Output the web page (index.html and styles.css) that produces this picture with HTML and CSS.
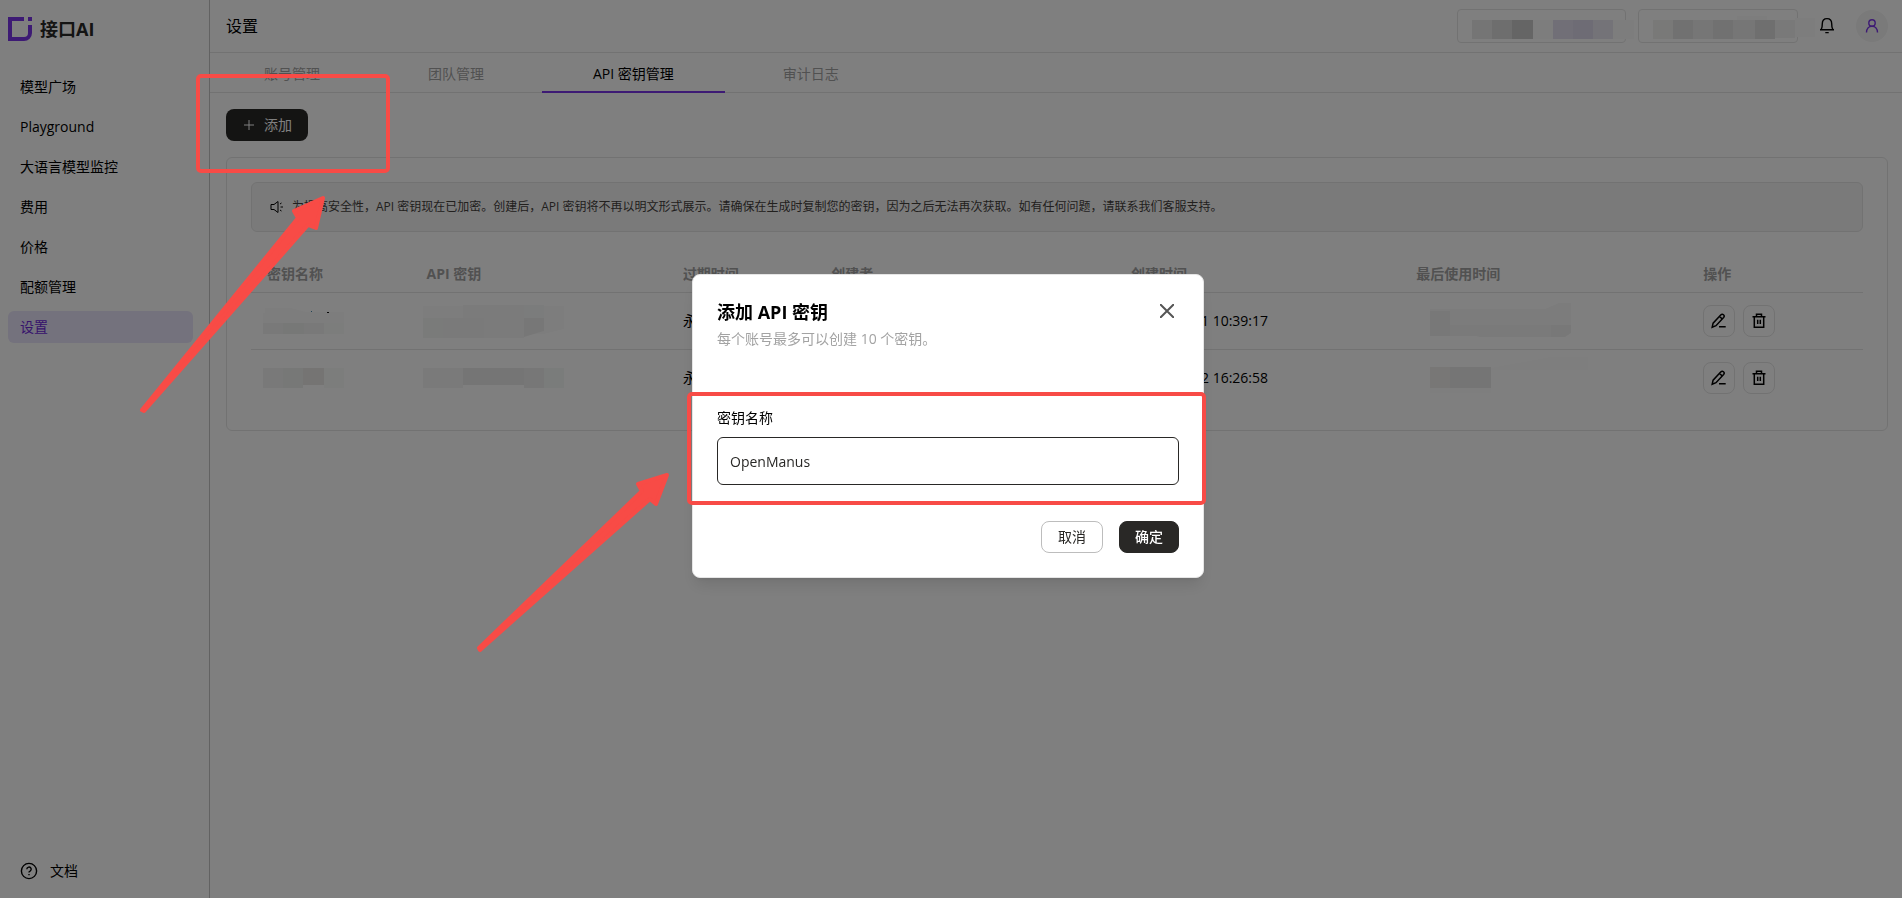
FILE: index.html
```html
<!DOCTYPE html>
<html lang="zh-CN">
<head>
<meta charset="utf-8">
<title>接口AI - 设置</title>
<link rel="stylesheet" href="styles.css">
</head>
<body>
<div class="app">
  <aside class="sidebar">
    <a class="brand" href="#">
      <svg class="brand-mark" viewBox="0 0 24 24" aria-hidden="true"><path d="M16 2H2v20h14a6 6 0 0 0 6-6V8" fill="none" stroke="#7b34e8" stroke-width="4"/><path d="M20 0h4v4h-4z" fill="#7b34e8"/></svg>
      <span>接口AI</span>
    </a>
    <nav class="nav">
      <a href="#">模型广场</a>
      <a href="#">Playground</a>
      <a href="#">大语言模型监控</a>
      <a href="#">费用</a>
      <a href="#">价格</a>
      <a href="#">配额管理</a>
      <a href="#" class="active" aria-current="page">设置</a>
    </nav>
    <a class="docs" href="#">
      <svg viewBox="0 0 18 18" aria-hidden="true"><circle cx="9" cy="9" r="7.6"/><path d="M6.8 7.3a2.2 2.2 0 1 1 3.3 1.9c-.8.4-1.1.7-1.1 1.3M9 12v1.3"/></svg>
      <span>文档</span>
    </a>
  </aside>
  <main class="main">
    <header class="topbar">
      <h1>设置</h1>
      <div class="tools">
        <div class="chip chip-a"><svg class="mosaic" width="164" height="19" aria-hidden="true"><path fill="#ebebeb" d="M0 0h20v19H0z"/><path fill="#dcdcdc" d="M20 0h20v19H20z"/><path fill="#cbcbcb" d="M40 0h21v19H40z"/><path fill="#fafafa" d="M61 0h20v19H61zM141 0h21v19h-21z"/><path fill="#e2dfee" d="M81 0h20v19H81z"/><path fill="#dcd8ea" d="M101 0h20v19h-20z"/><path fill="#e9e7f0" d="M121 0h20v19h-20z"/></svg></div>
        <div class="chip chip-b"><svg class="mosaic" width="164" height="19" aria-hidden="true"><path fill="#f3f3f0" d="M0 0h20v19H0z"/><path fill="#e2e2e2" d="M20 0h20v19H20z"/><path fill="#ececec" d="M40 0h20v19H40zM80 0h22v19H80z"/><path fill="#e2e2e2" d="M60 0h20v19H60z"/><path fill="#dedede" d="M102 0h20v19h-20z"/><path fill="#f3f3f3" d="M122 0h20v18h-20z"/><path fill="#fbfbfb" d="M142-2h20v19h-20zM84-4h30v4H84z"/></svg></div>
        <button class="bell" type="button" aria-label="通知"><svg viewBox="0 0 18 18" aria-hidden="true"><path d="M2 12.7h14M3.2 12.5C4.3 11 4.3 9 4.3 6.8 4.3 3.7 6.2 1.6 9 1.6s4.700 2.100 4.700 5.200c0 2.200 0 4.200 1.100 5.700M7.300 15.600h3.400"/></svg></button>
        <button class="avatar" type="button" aria-label="账户"><svg viewBox="0 0 16 16" aria-hidden="true"><circle cx="8" cy="5" r="3.200"/><path d="M2.500 14.500c0-3.500 2.200-6.300 5.500-6.300s5.500 2.800 5.500 6.300"/></svg></button>
      </div>
    </header>
    <nav class="tabs">
      <a href="#">账号管理</a>
      <a href="#">团队管理</a>
      <a href="#" class="active" aria-current="page">API 密钥管理</a>
      <a href="#">审计日志</a>
    </nav>
    <div class="content">
      <button class="add" type="button"><svg viewBox="0 0 10 10" aria-hidden="true"><path d="M5 0v10M0 5h10"/></svg><span>添加</span></button>
      <section class="card">
        <div class="notice">
          <svg viewBox="0 0 14 14" aria-hidden="true"><path d="M1 4.500h3l4-3v11l-4-3H1zM10 4l1.500-1M10.500 7H13M10 10l1.500 1"/></svg>
          <p>为提高安全性，API 密钥现在已加密。创建后，API 密钥将不再以明文形式展示。请确保在生成时复制您的密钥，因为之后无法再次获取。如有任何问题，请联系我们客服支持。</p>
        </div>
        <table>
          <colgroup><col class="c1"><col class="c2"><col class="c3"><col class="c4"><col class="c5"><col class="c6"><col></colgroup>
          <thead><tr><th>密钥名称</th><th>API 密钥</th><th>过期时间</th><th>创建者</th><th>创建时间</th><th>最后使用时间</th><th>操作</th></tr></thead>
          <tbody>
            <tr>
              <td><svg class="mosaic pull" width="82" height="20" aria-hidden="true"><path fill="#fbfbfb" d="M2-3h26l15 4h38v11H0V2h2z"/><path fill="#f3f3f3" d="M0 12h20v11H0zM41 12h20v11H41z"/><path fill="#eef0ef" d="M20 12h21v11H20z"/><path fill="#f8faf9" d="M61 12h20v11H61z"/><path fill="#111" d="M64 1h2v1h-2z"/><path fill="#48a" d="M48 0h1v1h-1z"/></svg></td>
              <td><svg class="mosaic pull" width="142" height="20" aria-hidden="true"><path fill="#fbfbfb" d="M0-5h141v23l-20 5H0z"/><path fill="#f7f7f7" d="M40-6h61v33H40z"/><path fill="#f5f6f4" d="M0 7h20v20H0z"/><path fill="#f5f5f5" d="M20 7h41v20H20z"/><path fill="#f7f9f8" d="M101-6h20V7h-20z"/><path fill="#efefef" d="M101 7h20v13l-20 6z"/></svg></td>
              <td>永不过期</td><td></td><td>2025–03–11 10:39:17</td>
              <td><svg class="mosaic push" width="142" height="36" aria-hidden="true"><path fill="#f8f8f8" d="M0 6h115l14-6h12v22H0z"/><path fill="#f1f1f1" d="M0 8h20v25H0zM121 22h20v8l-6 4h-14z"/><path fill="#f4f4f4" d="M20 22h101v12H50l-4-1H20z"/></svg></td>
              <td><div class="ops">
                <button type="button" aria-label="编辑"><svg viewBox="0 0 16 16"><path d="M1.200 14.200l.9-4L9.700 2c.8-.8 2-.9 2.800-.2s.8 1.900.1 2.700L5 12.700zM8.400 3.400l2.900 2.600M8 13.700h6.700"/></svg></button>
                <button type="button" aria-label="删除"><svg viewBox="0 0 16 16"><path d="M1.500 3.800h13M5.500 3.800V1.300h5v2.500M3.300 3.800v10.400h9.400V3.800M6.700 6.700V11M9.300 6.700V11"/></svg></button>
              </div></td>
            </tr>
            <tr>
              <td><svg class="mosaic pull" width="82" height="20" aria-hidden="true"><path fill="#f3f3f3" d="M0 0h20v20H0z"/><path fill="#eef0ef" d="M20 0h20v20H20z"/><path fill="#eae9e6" d="M40 0h21v17H40z"/><path fill="#f8faf9" d="M61 0h20v20H61z"/></svg></td>
              <td><svg class="mosaic pull" width="142" height="20" aria-hidden="true"><path fill="#f4f4f4" d="M0 0h40v20H0z"/><path fill="#ebebeb" d="M40 0h61v17H40z"/><path fill="#efefef" d="M101 0h20v20h-20z"/><path fill="#f5f8f7" d="M121 0h20v20h-20z"/></svg></td>
              <td>永不过期</td><td></td><td>2025–03–12 16:26:58</td>
              <td><svg class="mosaic push" width="142" height="36" aria-hidden="true"><path fill="#fcfcfc" d="M61 8l60-11h37v13H61zM0 28h61v5H0z"/><path fill="#f0efed" d="M0 7h20v21H0z"/><path fill="#ebebeb" d="M20 7h41v21H20z"/></svg></td>
              <td><div class="ops">
                <button type="button" aria-label="编辑"><svg viewBox="0 0 16 16"><path d="M1.200 14.200l.9-4L9.700 2c.8-.8 2-.9 2.800-.2s.8 1.900.1 2.700L5 12.700zM8.400 3.400l2.900 2.600M8 13.700h6.700"/></svg></button>
                <button type="button" aria-label="删除"><svg viewBox="0 0 16 16"><path d="M1.500 3.800h13M5.500 3.800V1.300h5v2.500M3.300 3.800v10.400h9.400V3.800M6.700 6.700V11M9.300 6.700V11"/></svg></button>
              </div></td>
            </tr>
          </tbody>
        </table>
      </section>
    </div>
  </main>
</div>

<div class="overlay">
  <form class="dialog" role="dialog" aria-labelledby="dialog-title">
    <div class="dialog-head">
      <div>
        <h2 id="dialog-title">添加 API 密钥</h2>
        <p>每个账号最多可以创建 10 个密钥。</p>
      </div>
      <button class="close" type="button" aria-label="关闭"><svg viewBox="0 0 14 14"><path d="M0 0l14 14M14 0L0 14"/></svg></button>
    </div>
    <div class="field">
      <label for="key-name">密钥名称</label>
      <input id="key-name" type="text" value="OpenManus">
    </div>
    <div class="dialog-foot">
      <button class="cancel" type="button">取消</button>
      <button class="confirm" type="button">确定</button>
    </div>
  </form>
</div>

<svg class="marks" aria-hidden="true">
  <g fill="none" stroke="#f84b46" stroke-width="4">
    <rect x="198" y="76" width="190" height="95" rx="3"/>
    <rect x="689" y="394" width="515" height="109" rx="3"/>
  </g>
  <g fill="#f84b46" stroke="#f84b46" stroke-width="4" stroke-linejoin="round">
    <path d="M142 410l156-192-4-7 29-13-7 30-8-3L144 411z"/>
    <path d="M479 648l163-157-4-7 29-9-11 29-6-5L480 650z"/>
  </g>
</svg>
</body>
</html>
```
FILE: styles.css
```css
* { box-sizing: border-box; }
body {
  margin: 0;
  font: 14px/20px "Open Sans", "Noto Sans CJK SC", sans-serif;
  color: #000;
  background: #fff;
}
h1, h2, p { margin: 0; }
a { color: inherit; text-decoration: none; }
button { font: inherit; cursor: pointer; }
svg { display: block; flex: none; }
button svg, .docs svg, .notice svg { fill: none; stroke: currentColor; }

.app { display: flex; min-height: 100vh; }
.sidebar {
  display: flex;
  flex-direction: column;
  flex: none;
  width: 210px;
  padding: 16px 16px 17px 8px;
  border-right: 1px solid #c4c4c4;
}
.brand {
  display: flex;
  align-items: center;
  gap: 8px;
  height: 26px;
  font-size: 18px;
  font-weight: 700;
  color: #292826;
}
.brand-mark { width: 24px; height: 24px; }
.nav { display: flex; flex-direction: column; gap: 8px; margin-top: 29px; }
.nav a { padding: 6px 12px; border-radius: 6px; }
.nav .active { background: #e8e4fa; color: #6d28d9; }
.docs {
  display: flex;
  align-items: center;
  gap: 12px;
  margin-top: auto;
  padding-left: 12px;
}
.docs svg { width: 18px; height: 18px; stroke-width: 1.4; }

.main { flex: 1; min-width: 0; }
.topbar {
  display: flex;
  align-items: center;
  justify-content: space-between;
  height: 53px;
  padding: 0 14px 0 16px;
  border-bottom: 1px solid #e5e5e5;
}
.topbar h1 { font-size: 16px; font-weight: 400; }
.tools { display: flex; align-items: center; gap: 12px; }
.chip {
  display: flex;
  align-items: center;
  height: 34px;
  padding: 6px 0 0 14px;
  border: 1px solid #e5e5e5;
  border-radius: 4px;
}
.mosaic { overflow: visible; }
.pull { margin-left: -4px; }
.push { margin-left: 14px; }
.chip-a { width: 169px; }
.chip-b { width: 160px; }
.bell { margin-left: 8px; padding: 0; border: 0; background: none; color: #000; }
.bell svg { width: 18px; height: 18px; stroke-width: 1.4; }
.avatar {
  display: grid;
  place-items: center;
  width: 32px;
  height: 32px;
  margin-left: 8px;
  padding: 0;
  border: 0;
  border-radius: 50%;
  background: #f4f4f4;
  color: #7b34e8;
}
.avatar svg { width: 16px; height: 16px; stroke-width: 1.4; }

.tabs {
  display: flex;
  gap: 8px;
  height: 40px;
  padding-left: 4px;
  border-bottom: 1px solid #e5e5e5;
  color: #a3a3a3;
}
.tabs a { height: 40px; padding: 11px 50px 7px; }
.tabs .active { padding: 11px 51px 7px; border-bottom: 2px solid #7b34e8; color: #000; }

.content { padding: 16px 14px 16px 16px; }
.add {
  display: flex;
  align-items: center;
  gap: 10px;
  height: 32px;
  padding: 0 16px 0 18px;
  border: 0;
  border-radius: 8px;
  background: #292826;
  color: #fff;
}
.add svg { width: 10px; height: 10px; }
.card {
  margin-top: 16px;
  padding: 24px;
  border: 1px solid #e5e5e5;
  border-radius: 6px;
}
.notice {
  display: flex;
  align-items: center;
  gap: 8px;
  height: 50px;
  margin-bottom: 24px;
  padding: 0 18px;
  border: 1px solid #e5e5e5;
  border-radius: 6px;
  background: #f5f5f5;
  font-size: 12px;
  color: #44403c;
}
.notice svg { width: 14px; height: 14px; color: #000; }

table { width: 100%; border-collapse: collapse; table-layout: fixed; }
.c1 { width: 9.9%; }
.c2 { width: 15.9%; }
.c3 { width: 9.2%; }
.c4 { width: 18.6%; }
.c5 { width: 17.7%; }
.c6 { width: 17.8%; }
th {
  height: 36px;
  padding: 0 16px;
  text-align: left;
  font-weight: 700;
  color: #a3a3a3;
}
td { height: 57px; padding: 0 16px; }
th, td { border-bottom: 1px solid #e5e5e5; }
tr:last-child td { border-bottom: 0; }
.ops { display: flex; gap: 8px; }
.ops button {
  display: grid;
  place-items: center;
  width: 32px;
  height: 32px;
  padding: 0;
  border: 1px solid #e5e5e5;
  border-radius: 8px;
  background: none;
  color: #000;
}
.ops svg { width: 16px; height: 16px; stroke-width: 1.5; }

.overlay {
  position: fixed;
  inset: 0;
  display: flex;
  justify-content: center;
  align-items: flex-start;
  padding: 274px 6px 0 0;
  background: rgba(0, 0, 0, .5);
}
.dialog {
  width: 512px;
  padding: 23px 24px 24px;
  border: 1px solid #e5e5e5;
  border-radius: 8px;
  background: #fff;
  box-shadow: 0 10px 15px -3px rgba(0, 0, 0, .1), 0 4px 6px -4px rgba(0, 0, 0, .1);
}
.dialog-head { display: flex; justify-content: space-between; align-items: flex-start; }
.dialog h2 { font-size: 18px; line-height: 28px; }
.dialog-head p { margin-top: 3px; color: #a3a3a3; }
.close { padding: 6px 5px; border: 0; background: none; color: #555; }
.close svg { width: 14px; height: 14px; stroke-width: 2; }
.field { display: flex; flex-direction: column; gap: 9px; margin-top: 59px; }
.field input {
  width: 100%;
  height: 48px;
  padding: 0 12px;
  border: 1px solid #292826;
  border-radius: 6px;
  outline: 0;
  font: inherit;
  color: #292826;
}
.dialog-foot { display: flex; justify-content: flex-end; gap: 16px; margin-top: 36px; }
.dialog-foot button {
  height: 32px;
  padding: 0 16px;
  border: 1px solid #bdbdbd;
  border-radius: 8px;
  background: #fff;
  color: #292826;
}
.dialog-foot .confirm { padding: 0 15px; border-color: #292826; background: #292826; color: #fff; font-weight: 500; }

.marks { position: fixed; inset: 0; width: 100%; height: 100%; pointer-events: none; }
```
